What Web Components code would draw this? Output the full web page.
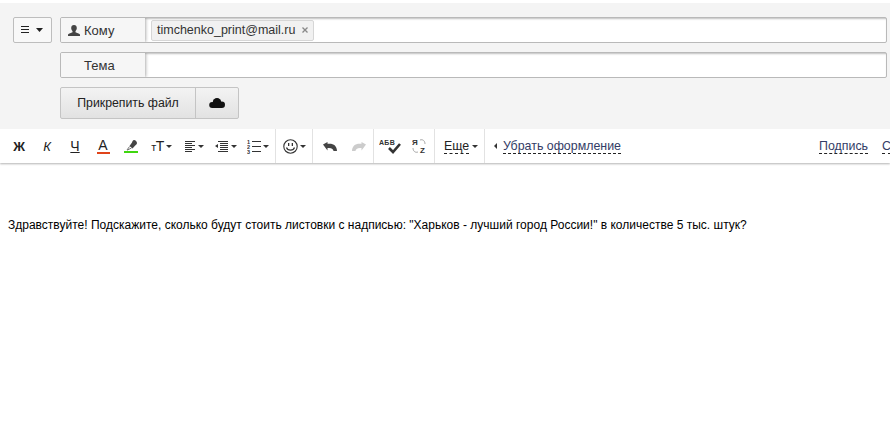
<!DOCTYPE html>
<html>
<head>
<meta charset="utf-8">
<title>Письмо</title>
<style>
    html, body { margin: 0; height: 100%; overflow: hidden; background: #fff; }
    body { font-family: "Liberation Sans", Arial, sans-serif; }
</style>
</head>
<body>

<compose-page>
    <compose-head>
        <compose-field label="Кому" icon="user" menu>
            <recipient-token>timchenko_print@mail.ru</recipient-token>
        </compose-field>
        <compose-field label="Тема"></compose-field>
        <attach-buttons></attach-buttons>
    </compose-head>
    <format-toolbar></format-toolbar>
    <message-body>Здравствуйте! Подскажите, сколько будут стоить листовки с надписью: "Харьков - лучший город России!" в количестве 5 тыс. штук?</message-body>
</compose-page>

<script>
class composePage extends HTMLElement {
    constructor() {
        super();
        this.shadow = this.attachShadow({ mode: 'open' });
    }
    connectedCallback() {
        this.shadow.innerHTML = `
        <style>
        :host { display: flex; flex-direction: column; width: 890px; height: 424px; overflow: hidden; padding-top: 3px; box-sizing: border-box; }
        </style>
        <slot></slot>`;
    }
}

class composeHead extends HTMLElement {
    constructor() {
        super();
        this.shadow = this.attachShadow({ mode: 'open' });
    }
    connectedCallback() {
        this.shadow.innerHTML = `
        <style>
        :host { display: flex; flex-direction: column; gap: 9px; height: 126px; box-sizing: border-box; padding: 14px 3px 0 13px; background: #f4f4f4; }
        </style>
        <slot></slot>`;
    }
}

class composeField extends HTMLElement {
    constructor() {
        super();
        this.shadow = this.attachShadow({ mode: 'open' });
    }
    connectedCallback() {
        const label = this.getAttribute('label');
        const user = this.getAttribute('icon') === 'user' ? `
            <svg width="12" height="11" viewBox="0 0 12 11"><path fill="#444" d="M6 0c1.800 0 2.800 1.200 2.800 3 0 1.400-.6 2.500-1.300 3.100v1.200C9 8 11 8.300 12 9.500V11H0V9.500C1 8.300 3 8 4.500 7.300V6.100C3.800 5.500 3.200 4.400 3.200 3 3.200 1.200 4.200 0 6 0z"/></svg>` : '';
        const menu = this.hasAttribute('menu') ? `
            <div class="menu">
                <svg width="10" height="8" viewBox="0 0 10 8"><path fill="#222" d="M0 0h8v1H0zM0 3h8v1H0zM0 6h8v1H0z"/></svg>
                <svg width="8" height="4" viewBox="0 0 8 4"><path fill="#222" d="M0 0h7L3.500 4z"/></svg>
            </div>` : '<div class="menu-gap"></div>';
        this.shadow.innerHTML = `
        <style>
        :host { display: flex; gap: 8px; height: 26px; }
        .menu, .menu-gap { width: 39px; flex: none; box-sizing: border-box; }
        .menu { display: flex; align-items: center; justify-content: center; gap: 5px; border: 1px solid #bdbdbd; border-radius: 2px; background: #f8f8f8; }
        .field { flex: 1; display: flex; box-sizing: border-box; border: 1px solid #b9b9b9; border-radius: 2px; background: #fff; overflow: hidden; }
        .label { width: 84px; flex: none; box-sizing: border-box; display: flex; align-items: center; gap: 4px; padding: 1px 0 0 23px;
            font-size: 13px; color: #333; background: #f6f6f6; box-shadow: 1px 0 3px rgba(0,0,0,.3); position: relative; }
        .label.has-icon { padding-left: 7px; }
        .value { flex: 1; display: flex; align-items: center; padding-left: 6px; box-shadow: inset 0 2px 2px -1px rgba(0,0,0,.25); }
        </style>
        ${menu}
        <div class="field">
            <div class="label ${user ? 'has-icon' : ''}">${user}<span>${label}</span></div>
            <div class="value"><slot></slot></div>
        </div>`;
    }
}

class recipientToken extends HTMLElement {
    constructor() {
        super();
        this.shadow = this.attachShadow({ mode: 'open' });
    }
    connectedCallback() {
        this.shadow.innerHTML = `
        <style>
        :host { display: flex; align-items: center; gap: 7px; box-sizing: border-box; width: 163px; height: 21px; padding-left: 5px;
            border: 1px solid #d6d6d6; border-radius: 2px; background: #f1f1f1; font-size: 12.500px; color: #333; white-space: nowrap; }
        svg { flex: none; }
        </style>
        <slot></slot>
        <svg width="6" height="6" viewBox="0 0 6 6"><path stroke="#888" stroke-width="1.300" d="M.5.5l5 5M5.500.5l-5 5"/></svg>`;
    }
}

class attachButtons extends HTMLElement {
    constructor() {
        super();
        this.shadow = this.attachShadow({ mode: 'open' });
    }
    connectedCallback() {
        this.shadow.innerHTML = `
        <style>
        :host { display: flex; height: 32px; margin-left: 47px; width: 179px; box-sizing: border-box; border: 1px solid #c4c4c4; border-radius: 2px; background: linear-gradient(#f3f3f3, #e2e2e2); color: #222; font-size: 12.300px; }
        .file { width: 135px; border-right: 1px solid #c4c4c4; display: flex; align-items: center; justify-content: center; box-sizing: border-box; }
        .cloud { flex: 1; display: flex; align-items: center; justify-content: center; }
        </style>
        <div class="file">Прикрепить файл</div>
        <div class="cloud">
            <svg width="16" height="10" viewBox="0 0 16 10"><circle cx="3.200" cy="7" r="3" fill="#111"/><circle cx="8" cy="4.200" r="4.200" fill="#111"/><circle cx="12.800" cy="6.800" r="3.200" fill="#111"/><path fill="#111" d="M3 6h10v4H3z"/></svg>
        </div>`;
    }
}

class toolButton extends HTMLElement {
    constructor() {
        super();
        this.shadow = this.attachShadow({ mode: 'open' });
    }
    connectedCallback() {
        const w = this.getAttribute('w') || 28;
        const caret = this.hasAttribute('caret') ? `<svg class="caret" width="6" height="3" viewBox="0 0 6 3"><path fill="#333" d="M0 0h6L3 3z"/></svg>` : '';
        this.shadow.innerHTML = `
        <style>
        :host { display: flex; align-items: center; justify-content: center; gap: 2px; width: ${w}px; height: 100%; flex: none; box-sizing: border-box; color: #222; font-size: 14px; }
        :host([sep]) { border-right: 1px solid #e2e2e2; }
        .caret { flex: none; }
        </style>
        <slot></slot>${caret}`;
    }
}

class formatToolbar extends HTMLElement {
    constructor() {
        super();
        this.shadow = this.attachShadow({ mode: 'open' });
    }
    connectedCallback() {
        this.shadow.innerHTML = `
        <style>
        :host { display: flex; align-items: stretch; height: 34px; padding-left: 5px; background: #fff; box-shadow: 0 1px 2px rgba(0,0,0,.3); position: relative; overflow: hidden; flex: none; clip-path: inset(0 0 -4px 0); }
        .b { font-weight: bold; font-size: 13px; }
        .i { font-style: italic; font-size: 13px; }
        .u { text-decoration: underline; }
        .col { display: block; width: 13px; text-align: center; border-bottom: 2px solid; line-height: 12px; padding-bottom: 1px; }
        .tt { font-size: 14px; letter-spacing: -0.5px; }
        .tt small { font-size: 11px; }
        .dash { border-bottom: 1px dashed #222; line-height: 14px; color: #333c66; font-size: 12.400px; white-space: nowrap; }
        .more { display: flex; align-items: center; gap: 3px; padding-left: 9px; }
        .more .dash { color: #222; }
        .clear { display: flex; align-items: center; gap: 6px; padding-left: 9px; }
        .right { margin-left: auto; display: flex; align-items: center; gap: 14px; width: 71px; flex: none; }
        .right .dash:last-child { flex: none; }
        svg { display: block; }
        text { font-family: "Liberation Sans", Arial, sans-serif; font-weight: bold; fill: #333; }
        </style>
        <tool-button><span class="b">Ж</span></tool-button>
        <tool-button><span class="i">К</span></tool-button>
        <tool-button><span class="u">Ч</span></tool-button>
        <tool-button><span class="col" style="border-color:#e0441a">А</span></tool-button>
        <tool-button>
            <svg width="14" height="13" viewBox="0 0 14 13"><path fill="#444" d="M10 0c1.500 0 3 1.500 3 3 0 1-1 1.800-2 2.800L8.500 8.500 5.500 6 8 2.500C8.500 1 9 0 10 0z"/><path fill="none" stroke="#777" d="M5.500 6.500L3 10h.5L7.500 8"/><path fill="#3fd60f" d="M0 11h14v2H0z"/></svg>
        </tool-button>
        <tool-button w="33" caret><span class="tt"><small>т</small>Т</span></tool-button>
        <tool-button w="32" caret>
            <svg width="11" height="11" viewBox="0 0 11 11"><path fill="#333" d="M0 0h10v1H0zM0 2h7v1H0zM0 4h10v1H0zM0 6h7v1H0zM0 8h10v1H0zM0 10h7v1H0z"/></svg>
        </tool-button>
        <tool-button w="31" caret>
            <svg width="14" height="11" viewBox="0 0 14 11"><path fill="#333" d="M3 0h10v1H3zM5 2h8v1H5zM5 4h8v1H5zM5 6h8v1H5zM5 8h8v1H5zM3 10h10v1H3zM3 3v4L0 5z"/></svg>
        </tool-button>
        <tool-button w="35" sep caret>
            <svg width="14" height="15" viewBox="0 0 14 15">
                <text x="0" y="5" font-size="5.500">1</text><text x="0" y="10" font-size="5.500">2</text><text x="0" y="15" font-size="5.500">3</text>
                <path fill="#333" d="M5 2h9v1H5zM5 7h9v1H5zM5 12h9v1H5z"/>
            </svg>
        </tool-button>
        <tool-button w="37" sep caret>
            <svg width="15" height="15" viewBox="0 0 15 15"><circle cx="7.500" cy="7.500" r="6.700" fill="none" stroke="#333" stroke-width="1.100"/><path fill="#333" d="M5 4h1.300v3H5zM8.700 4H10v3H8.700z"/><path fill="none" stroke="#333" stroke-width="1.200" d="M3.500 8.500c1 3.500 7 3.500 8 0"/></svg>
        </tool-button>
        <tool-button w="31" style="padding-left:2px">
            <svg width="14" height="9" viewBox="0 0 14 9"><path fill="#444" d="M0 2.500L4.500 0v1.800C10 1 14 3.500 14 9h-3.500C10.500 7 8.500 5.500 4.500 6v2.500z"/></svg>
        </tool-button>
        <tool-button w="30" sep>
            <svg width="14" height="9" viewBox="0 0 14 9"><path fill="#ccc" d="M14 2.500L9.500 0v1.800C4 1 0 3.500 0 9h3.500C3.500 7 5.500 5.500 9.500 6v2.500z"/></svg>
        </tool-button>
        <tool-button w="31">
            <svg width="22" height="15" viewBox="0 0 22 15">
                <text x="0" y="6" font-size="7" letter-spacing=".3">АБВ</text>
                <path fill="none" stroke="#333" stroke-width="2.600" d="M10 9l4 4 7-8"/>
            </svg>
        </tool-button>
        <tool-button w="30" sep>
            <svg width="15" height="16" viewBox="0 0 15 16">
                <text x="0" y="7" font-size="8">Я</text>
                <text x="8" y="15" font-size="8">Z</text>
                <path fill="none" stroke="#aaa" d="M8 2c3-1 5 1 5 4M1 10c0 3 2 5 5 4"/>
            </svg>
        </tool-button>
        <tool-button w="50" sep style="justify-content:flex-start">
            <div class="more"><span class="dash">Еще</span><svg width="6" height="3" viewBox="0 0 6 3"><path fill="#333" d="M0 0h6L3 3z"/></svg></div>
        </tool-button>
        <div class="clear">
            <svg width="3" height="6" viewBox="0 0 3 6"><path fill="#333" d="M3 0v6L0 3z"/></svg>
            <span class="dash">Убрать оформление</span>
        </div>
        <div class="right"><span class="dash">Подпись</span><span class="dash">С</span></div>`;
    }
}

class messageBody extends HTMLElement {
    constructor() {
        super();
        this.shadow = this.attachShadow({ mode: 'open' });
    }
    connectedCallback() {
        this.shadow.innerHTML = `
        <style>
        :host { display: block; flex: 1; padding: 55px 0 0 8px; font-size: 12px; line-height: 14px; letter-spacing: .005px; color: #000; background: #fff; white-space: nowrap; }
        </style>
        <slot></slot>`;
    }
}

customElements.define('compose-page', composePage);
customElements.define('compose-head', composeHead);
customElements.define('compose-field', composeField);
customElements.define('recipient-token', recipientToken);
customElements.define('attach-buttons', attachButtons);
customElements.define('tool-button', toolButton);
customElements.define('format-toolbar', formatToolbar);
customElements.define('message-body', messageBody);
</script>
</body>
</html>
